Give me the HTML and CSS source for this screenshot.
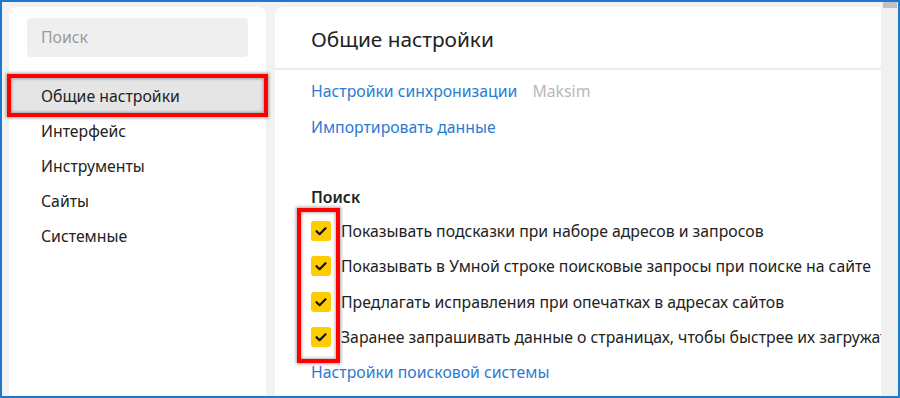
FILE: index.html
```
<!DOCTYPE html>
<html lang="ru">
<head>
<meta charset="utf-8">
<title>Настройки</title>
<link rel="stylesheet" href="styles.css">
</head>
<body>
<div class="window">
  <aside class="sidebar">
    <div class="search">Поиск</div>
    <nav class="nav">
      <div class="nav-item active">Общие настройки</div>
      <div class="nav-item">Интерфейс</div>
      <div class="nav-item">Инструменты</div>
      <div class="nav-item">Сайты</div>
      <div class="nav-item">Системные</div>
    </nav>
  </aside>
  <main class="main">
    <header class="main-header">Общие настройки</header>
    <div class="content">
      <div class="link-row"><span class="link">Настройки синхронизации</span><span class="user">Maksim</span></div>
      <div class="link-row"><span class="link">Импортировать данные</span></div>
      <div class="section-title">Поиск</div>
      <div class="check-row"><span class="checkbox"><svg viewBox="0 0 20 20" width="20" height="20"><polyline points="5.5,10.2 8.6,13.2 14.5,7.2" fill="none" stroke="#111" stroke-width="2.2" stroke-linecap="round" stroke-linejoin="round"/></svg></span><span class="label">Показывать подсказки при наборе адресов и запросов</span></div>
      <div class="check-row"><span class="checkbox"><svg viewBox="0 0 20 20" width="20" height="20"><polyline points="5.5,10.2 8.6,13.2 14.5,7.2" fill="none" stroke="#111" stroke-width="2.2" stroke-linecap="round" stroke-linejoin="round"/></svg></span><span class="label">Показывать в Умной строке поисковые запросы при поиске на сайте</span></div>
      <div class="check-row"><span class="checkbox"><svg viewBox="0 0 20 20" width="20" height="20"><polyline points="5.5,10.2 8.6,13.2 14.5,7.2" fill="none" stroke="#111" stroke-width="2.2" stroke-linecap="round" stroke-linejoin="round"/></svg></span><span class="label">Предлагать исправления при опечатках в адресах сайтов</span></div>
      <div class="check-row"><span class="checkbox"><svg viewBox="0 0 20 20" width="20" height="20"><polyline points="5.5,10.2 8.6,13.2 14.5,7.2" fill="none" stroke="#111" stroke-width="2.2" stroke-linecap="round" stroke-linejoin="round"/></svg></span><span class="label">Заранее запрашивать данные о страницах, чтобы быстрее их загружать</span></div>
      <div class="link-row last"><span class="link">Настройки поисковой системы</span></div>
    </div>
  </main>
  <div class="scrollbar"><div class="thumb"></div></div>
  <div class="mark mark-nav"></div>
  <div class="mark mark-checks"></div>
</div>
</body>
</html>
```
FILE: styles.css
```
* { box-sizing: border-box; }
html, body { margin: 0; padding: 0; }
body {
  font-family: "Noto Sans", "Open Sans", sans-serif;
  color: #222;
  font-size: 15.8px;
}
.window {
  position: relative;
  width: 900px;
  height: 398px;
  border: 2px solid #1a7acb;
  background: #f2f2f2;
  display: flex;
  overflow: hidden;
}
.sidebar {
  width: 257px;
  margin: 5px 0 0 7px;
  background: #fff;
  border-radius: 8px 8px 0 0;
  padding-top: 11px;
}
.search {
  margin: 0 18px;
  height: 39px;
  border-radius: 4px;
  background: #efefef;
  color: #9a9a9a;
  padding-left: 14px;
  line-height: 39px;
}
.nav { margin-top: 21px; }
.nav-item {
  height: 35px;
  line-height: 35px;
  padding-left: 32px;
}
.nav-item.active {
  background: #e5e5e5;
  margin: 0 1px;
  padding-left: 31px;
  height: 36px;
  line-height: 36px;
}
.main {
  flex: 1;
  margin: 5px 0 0 9px;
  background: #fff;
  border-radius: 8px 0 0 0;
  overflow: hidden;
  min-width: 0;
}
.main-header {
  height: 63px;
  padding: 0 0 0 36px;
  line-height: 64px;
  font-size: 20.8px;
  border-bottom: 2px solid #ebebeb;
}
.content {
  padding: 3px 0 0 36px;
  white-space: nowrap;
}
.link-row {
  height: 36px;
  display: flex;
  align-items: center;
}
.link { color: #2b7bd3; }
.user { color: #b8b8b8; margin-left: 15px; }
.section-title {
  margin-top: 36px;
  height: 32px;
  line-height: 32px;
  font-weight: 600;
}
.check-row {
  height: 35.5px;
  display: flex;
  align-items: center;
}
.checkbox {
  width: 20px;
  height: 20px;
  border-radius: 3px;
  background: #ffcc00;
  flex: none;
  display: flex;
}
.label { margin-left: 10px; }
.link-row.last { height: 34px; }
.scrollbar {
  width: 17px;
  background: #f0f0f0;
  flex: none;
  padding: 0 1px 0 2px;
}
.thumb {
  height: 6px;
  background: #c1c1c1;
}
.mark {
  position: absolute;
  border: 4px solid #ff0000;
  box-shadow: 0 0 3px 1px rgba(0,0,0,0.35), inset 0 0 3px 1px rgba(0,0,0,0.3);
}
.mark-nav { left: 5px; top: 72px; width: 261px; height: 43px; }
.mark-checks { left: 295px; top: 206px; width: 43px; height: 155px; }
```
